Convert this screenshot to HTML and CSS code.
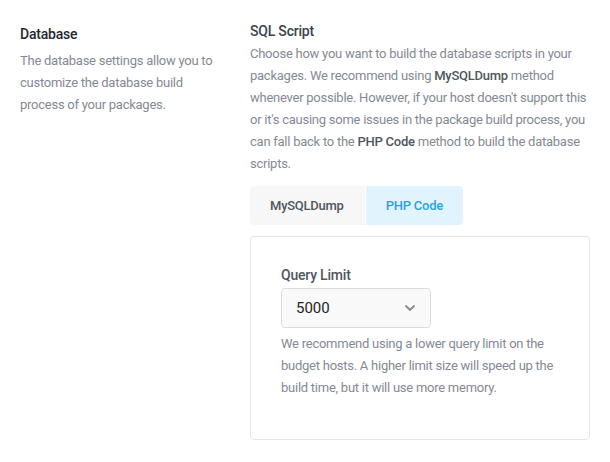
FILE: index.html
```html
<!DOCTYPE html>
<html>
<head>
<meta charset="utf-8">
<link rel="stylesheet" href="styles.css">
</head>
<body>
<div class="section">
  <div class="side">
    <h2 class="side-title">Database</h2>
    <p class="side-desc">The database settings allow you to customize the database build process of your packages.</p>
  </div>
  <div class="main">
    <h3 class="main-title">SQL Script</h3>
    <p class="main-desc">Choose how you want to build the database scripts in your packages. We recommend using <strong>MySQLDump</strong> method whenever possible. However, if your host doesn't support this or it's causing some issues in the package build process, you can fall back to the <strong>PHP Code</strong> method to build the database scripts.</p>
    <div class="tabs">
      <button class="tab">MySQLDump</button>
      <button class="tab tab-active">PHP Code</button>
    </div>
    <div class="card">
      <label class="field-label">Query Limit</label>
      <div class="select">
        <span class="select-value">5000</span>
        <svg class="chevron" width="10" height="6" viewBox="0 0 10 6"><path d="M1 1l4 4 4-4" fill="none" stroke="#8a8a8a" stroke-width="1.8" stroke-linecap="round" stroke-linejoin="round"/></svg>
      </div>
      <p class="field-help">We recommend using a lower query limit on the budget hosts. A higher limit size will speed up the build time, but it will use more memory.</p>
    </div>
  </div>
</div>
</body>
</html>
```
FILE: styles.css
```css
* { box-sizing: border-box; }
html, body { margin: 0; padding: 0; background: #fff; }
body { font-family: Roboto, "Noto Sans", sans-serif; }

.section {
  display: flex;
  gap: 30px;
  padding: 20px 0 0 20px;
}
.side {
  width: 200px;
  flex: none;
  padding-top: 3px;
}
.side-title {
  margin: 0;
  font-size: 14px;
  font-weight: 500;
  line-height: 22px;
  letter-spacing: -0.2px;
  color: #23282d;
}
.side-desc,
.main-desc,
.field-help {
  font-size: 13px;
  line-height: 22px;
  letter-spacing: -0.25px;
  color: #848a94;
}
.side-desc { margin: 5px 0 0; }
.main {
  width: 340px;
  flex: none;
}
.main-title {
  margin: 0;
  font-size: 14px;
  font-weight: 500;
  line-height: 22px;
  letter-spacing: -0.2px;
  color: #3c434a;
}
.main-desc { margin: 1px 0 0; }
.main-desc strong {
  font-family: "Roboto Medium", Roboto, sans-serif;
  font-weight: 500;
  color: #50575e;
}
.tabs {
  display: flex;
  gap: 1px;
  margin-top: 11px;
}
.tab {
  border: 0;
  height: 39px;
  padding: 0 21px 0 20px;
  font-family: "Roboto Medium", Roboto, sans-serif;
  font-size: 13px;
  font-weight: 500;
  letter-spacing: -0.25px;
  color: #50575e;
  background: #f7f7f7;
  border-radius: 4px 0 0 4px;
}
.tab-active {
  background: #e1f4fd;
  color: #2aa4de;
  border-radius: 0 4px 4px 0;
  padding: 0 20px;
}
.card {
  margin-top: 11px;
  border: 1px solid #e6e6e6;
  border-radius: 4px;
  padding: 27px 30px 40px;
  height: 204px;
}
.field-label {
  display: block;
  font-family: "Roboto Medium", Roboto, sans-serif;
  font-size: 14px;
  font-weight: 500;
  line-height: 22px;
  letter-spacing: -0.2px;
  color: #50575e;
}
.select {
  margin-top: 2px;
  width: 150px;
  height: 40px;
  border: 1px solid #dcdcdc;
  border-radius: 4px;
  background: #f9f9f9;
  display: flex;
  align-items: center;
  justify-content: space-between;
  padding: 0 15px 0 14px;
}
.select-value {
  font-size: 15px;
  color: #1e1e1e;
}
.chevron { display: block; }
.field-help { margin: 5px 0 0; }
```
